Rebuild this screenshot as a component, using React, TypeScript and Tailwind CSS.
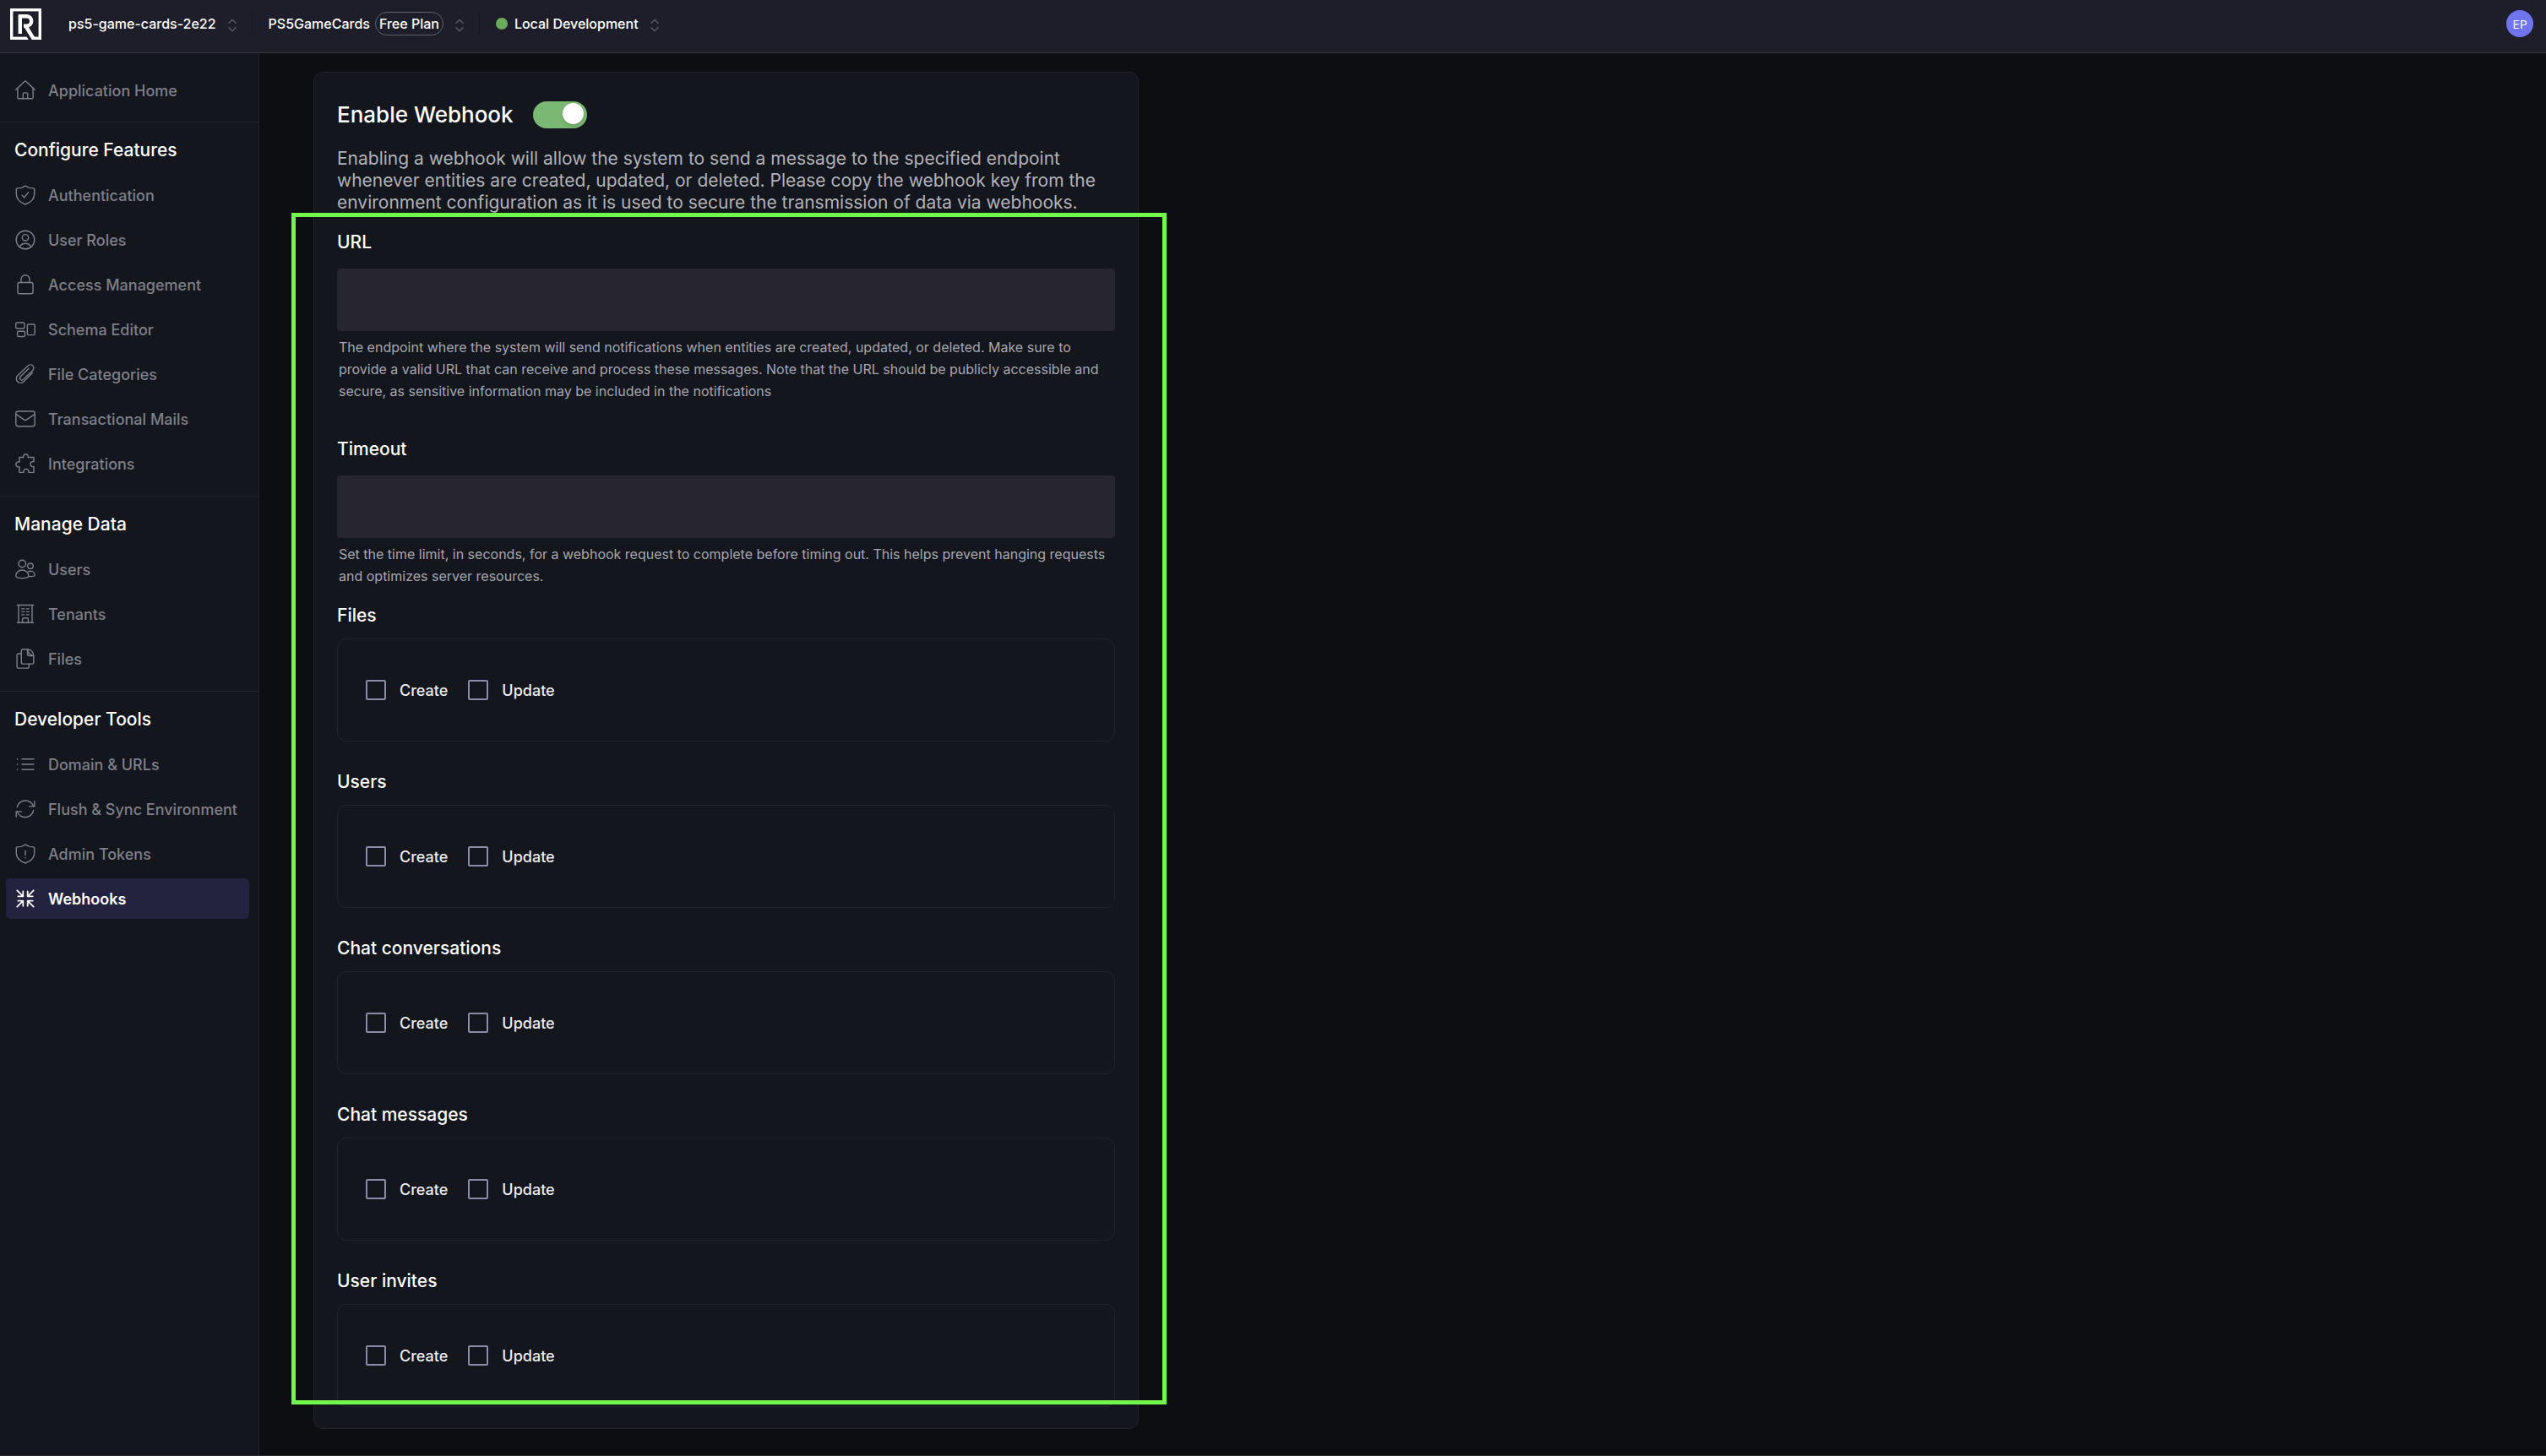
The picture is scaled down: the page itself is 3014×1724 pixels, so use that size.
import React from "react";

type IconName =
  | "home"
  | "shieldCheck"
  | "userCircle"
  | "lock"
  | "schema"
  | "clip"
  | "mail"
  | "puzzle"
  | "users"
  | "building"
  | "files"
  | "list"
  | "sync"
  | "shieldAlert"
  | "collapse";

const SHIELD =
  "M12 1c-2.6 1.9-5.6 2.9-9.4 2.9-.8 0-1.3.5-1.3 1.300v5.300c0 6 4 10.200 10.700 12.500 6.700-2.300 10.700-6.500 10.700-12.500V5.200c0-.8-.5-1.300-1.300-1.300-3.800 0-6.800-1-9.400-2.900z";

const ICONS: Record<IconName, React.ReactNode> = {
  home: (
    <>
      <path d="M.8 11.200 11 1.500c.6-.6 1.400-.6 2 0l10.200 9.700" />
      <path d="M2.900 9.300v11.400c0 .6.4 1 1 1h16.200c.6 0 1-.4 1-1V9.300" />
      <path d="M9.200 21.700v-5.200c0-.9.700-1.600 1.600-1.600h2.400c.9 0 1.600.7 1.600 1.600v5.200" />
    </>
  ),
  shieldCheck: (
    <>
      <path d={SHIELD} />
      <path d="m8.200 12.200 2.600 2.700 4.600-6.100" />
    </>
  ),
  userCircle: (
    <>
      <circle cx="12" cy="12" r="10.800" />
      <circle cx="12" cy="9.300" r="3.700" />
      <path d="M5.200 20.200c1.400-2.500 3.900-4 6.800-4s5.400 1.500 6.800 4" />
    </>
  ),
  lock: (
    <>
      <rect x="3" y="9.500" width="18" height="13.300" rx="2" />
      <path d="M6.900 9.500V5.900a5.100 5.100 0 0 1 10.200 0v3.600" />
    </>
  ),
  schema: (
    <>
      <rect x=".8" y="4" width="10.200" height="7" rx="1.600" />
      <rect x="2.600" y="14.200" width="9" height="6.300" rx="1.600" />
      <rect x="14.400" y="6" width="8.800" height="12.600" rx="1.600" />
    </>
  ),
  clip: (
    <path d="M20.500 10.200 10 20.900a5 5 0 0 1-7.200-7.100L15.200 2a3.900 3.900 0 0 1 5.600 5.500L9.600 18.300a2.400 2.400 0 0 1-3.400-3.400L16 5.300" />
  ),
  mail: (
    <>
      <rect x=".8" y="3" width="22.400" height="17.800" rx="2.500" />
      <path d="m1.200 6.600 9.600 6.500c.7.500 1.700.5 2.400 0l9.600-6.500" />
    </>
  ),
  puzzle: (
    <path d="M5 4.500h4.800c-.6-2 .8-3.700 2.700-3.700s3.300 1.700 2.700 3.700h6.800v5.200c-2-.7-4.200.7-4.200 2.900s2.200 3.500 4.200 2.800v7h-6.100c.6-2.100-.8-4.200-2.900-4.200s-3.500 2.100-2.900 4.200H5v-6.600c-2 .6-4.200-.7-4.200-2.900s2.200-3.500 4.200-2.800z" />
  ),
  users: (
    <>
      <circle cx="8.300" cy="5.500" r="4.300" />
      <circle cx="18" cy="8.200" r="3.200" />
      <path d="M8.300 13c-4.400 0-7.500 3-7.500 6.700 0 1.800 3.600 2.900 7.500 2.900s7.500-1.100 7.500-2.900c0-3.700-3.100-6.700-7.500-6.700z" />
      <path d="M15.300 15.100c.8-.5 1.700-.8 2.700-.8 3.100 0 5.200 2.100 5.200 4.600 0 1.400-3.400 2-7.400 1.600" />
    </>
  ),
  building: (
    <>
      <path d="M2.400 1.500h19.200M2.400 22.300h19.200M4 1.500v20.800M20 1.500v20.800" />
      <path d="M7.800 5.900h3M13.200 5.900h3M7.800 9.400h3M13.200 9.400h3M7.800 12.900h3M13.200 12.900h3" />
      <path d="M8.600 22.300v-4.200c0-.7.600-1.300 1.300-1.300h4.200c.7 0 1.300.6 1.300 1.300v4.200" />
    </>
  ),
  files: (
    <>
      <path d="M7.300 2.700c0-1.100.8-1.900 1.900-1.900h5.500c4 0 7.100 3.600 7.100 7.600v7.800c0 1.100-.8 1.900-1.900 1.900H9.200c-1.100 0-1.900-.8-1.900-1.900z" />
      <path d="M14.500.9v5.300c0 1.300 1 2.300 2.300 2.300h4.900M14.500.9c.6 3.800 3.200 6.700 7.200 7.600" />
      <path d="M7.300 6H4c-1.100 0-1.900.8-1.900 1.900v13.300c0 1.100.8 1.900 1.900 1.900h10.400c1.100 0 1.900-.8 1.900-1.900v-3.100" />
    </>
  ),
  list: (
    <path d="M8 5.700h14M8 12h14M8 18.300h14M2.400 5.700h.4M2.400 12h.4M2.400 18.300h.4" />
  ),
  sync: (
    <>
      <path d="M2.300 9.600C3.300 5.200 7.200 2 12 2c4.200 0 7.900 2.600 9.500 6.400" />
      <path d="M22.800 2.600v6.300h-6.300" />
      <path d="M21.700 13.500c-1 4.800-5 8.200-9.700 8.200-4.200 0-7.900-2.600-9.500-6.400" />
      <path d="M1.200 21.200v-6.300h6.300" />
    </>
  ),
  shieldAlert: (
    <>
      <path d={SHIELD} />
      <path d="M12 8.200v5.400M12 16.500v.2" />
    </>
  ),
  collapse: (
    <path
      strokeWidth="1.800"
      d="m2.300 2.300 7 7M9.300 3.300v6h-6M21.700 2.300l-7 7M14.700 3.300v6h6M2.300 21.700l7-7M9.300 20.700v-6h-6M21.700 21.700l-7-7M14.700 20.700v-6h6"
    />
  ),
};

function Icon({ name }: { name: IconName }) {
  return (
    <svg
      viewBox="0 0 24 24"
      className="size-6 shrink-0"
      fill="none"
      stroke="currentColor"
      strokeWidth="1.400"
      strokeLinecap="round"
      strokeLinejoin="round"
      aria-hidden="true"
    >
      {ICONS[name]}
    </svg>
  );
}

function UpDown() {
  return (
    <svg
      viewBox="0 0 10 16"
      className="mt-[3px] h-4 w-[10px] shrink-0 text-[#565563]"
      fill="none"
      stroke="currentColor"
      strokeWidth="1.500"
      strokeLinecap="round"
      strokeLinejoin="round"
      aria-hidden="true"
    >
      <path d="M1 5.200 5 1.200l4 4M1 10.800l4 4 4-4" />
    </svg>
  );
}

function Logo() {
  return (
    <svg viewBox="0 0 37 37" className="size-[37px]" fill="none" aria-hidden="true">
      <rect x="1.700" y="1.700" width="33.600" height="33.600" stroke="#fff" strokeWidth="3.400" />
      <path d="m16.500 24.500 8.500 14" stroke="#1e1e2a" strokeWidth="4" />
      <path
        d="M11.800 30V9.200h7.700a5.700 5.700 0 0 1 0 11.400H16"
        stroke="#fff"
        strokeWidth="4.400"
      />
      <path d="M18.200 20.500 28.400 37" stroke="#fff" strokeWidth="4.400" />
    </svg>
  );
}

type NavItem = { icon: IconName; label: string; active?: boolean };

const SECTIONS: { title: string; items: NavItem[] }[] = [
  {
    title: "Configure Features",
    items: [
      { icon: "shieldCheck", label: "Authentication" },
      { icon: "userCircle", label: "User Roles" },
      { icon: "lock", label: "Access Management" },
      { icon: "schema", label: "Schema Editor" },
      { icon: "clip", label: "File Categories" },
      { icon: "mail", label: "Transactional Mails" },
      { icon: "puzzle", label: "Integrations" },
    ],
  },
  {
    title: "Manage Data",
    items: [
      { icon: "users", label: "Users" },
      { icon: "building", label: "Tenants" },
      { icon: "files", label: "Files" },
    ],
  },
  {
    title: "Developer Tools",
    items: [
      { icon: "list", label: "Domain & URLs" },
      { icon: "sync", label: "Flush & Sync Environment" },
      { icon: "shieldAlert", label: "Admin Tokens" },
      { icon: "collapse", label: "Webhooks", active: true },
    ],
  },
];

function NavLink({ icon, label, active }: NavItem) {
  return (
    <a
      href="#"
      aria-current={active ? "page" : undefined}
      className={
        active
          ? "flex h-12 items-center gap-[15px] rounded-[5px] bg-[#24233f] px-[11px] text-[18px] font-semibold whitespace-nowrap text-white"
          : "flex h-12 items-center gap-[15px] rounded-[5px] px-[11px] text-[18px] font-medium whitespace-nowrap text-[#7e7f88]"
      }
    >
      <Icon name={icon} />
      {label}
    </a>
  );
}

function Sidebar() {
  return (
    <aside className="w-[307px] shrink-0 border-r border-[#212329] bg-[#14161e]">
      <nav>
        <div className="border-b border-[#212329] pt-5 pr-[11px] pb-[13px] pl-[7px]">
          <NavLink icon="home" label="Application Home" />
        </div>
        {SECTIONS.map((section) => (
          <section
            key={section.title}
            className="border-b border-[#212329] pt-[17px] pr-[11px] pb-[14px] pl-[7px] last:border-b-0"
          >
            <h2 className="mb-[13px] pl-[10px] text-[21px] leading-8 font-medium text-white">
              {section.title}
            </h2>
            <div className="flex flex-col gap-[5px]">
              {section.items.map((item) => (
                <NavLink key={item.label} {...item} />
              ))}
            </div>
          </section>
        ))}
      </nav>
    </aside>
  );
}

function Divider() {
  return <span className="mr-[19px] ml-[18px] h-6 w-px bg-[#181821]" />;
}

function Header() {
  return (
    <header className="flex h-[63px] shrink-0 items-center border-b border-[#35343f] bg-[#1e1e2a] pr-[15px] pb-[6px] pl-3 text-[16px] font-medium text-white">
      <a href="#" aria-label="Home" className="mr-8">
        <Logo />
      </a>
      <button type="button" className="flex items-center gap-[14px]">
        ps5-game-cards-2e22
        <UpDown />
      </button>
      <Divider />
      <button type="button" className="flex items-center gap-[14px]">
        <span className="flex items-center gap-[6px]">
          PS5GameCards
          <span className="flex h-7 items-center rounded-full border border-[#5f5f66] px-1">
            Free Plan
          </span>
        </span>
        <UpDown />
      </button>
      <Divider />
      <button type="button" className="flex items-center gap-[14px]">
        <span className="flex items-center gap-2">
          <span className="size-[14px] rounded-full bg-[#68ad5a]" />
          Local Development
        </span>
        <UpDown />
      </button>
      <button
        type="button"
        className="ml-auto flex size-8 items-center justify-center rounded-full bg-[#7174ef] font-['Open_Sans',sans-serif] text-[15px] font-normal"
      >
        EP
      </button>
    </header>
  );
}

function TextField({ id, label, hint }: { id: string; label: string; hint: string }) {
  return (
    <div>
      <label htmlFor={id} className="block text-[21px] leading-7 font-medium text-white">
        {label}
      </label>
      <input
        id={id}
        type="text"
        aria-describedby={id + "-hint"}
        className="mt-[17px] block h-[74px] w-full rounded-[4px] bg-[#262530] px-4 text-[18px] text-white outline-none"
      />
      <p id={id + "-hint"} className="mt-[6px] px-[2px] text-[16px] leading-[26px] text-[#a6a7ae]">
        {hint}
      </p>
    </div>
  );
}

function EventGroup({ title }: { title: string }) {
  return (
    <section>
      <h3 className="mb-[13px] text-[21px] leading-7 font-medium text-white">{title}</h3>
      <div className="flex h-[122px] items-center gap-6 rounded-[11px] border border-[#20232b] px-[33px]">
        {["Create", "Update"].map((action) => (
          <label
            key={action}
            className="flex items-center gap-4 text-[18px] font-medium text-[#ececf0]"
          >
            <input
              type="checkbox"
              className="size-6 appearance-none rounded-[2px] border-2 border-[#8d8ca8] checked:bg-[#8d8ca8]"
            />
            {action}
          </label>
        ))}
      </div>
    </section>
  );
}

const EVENT_GROUPS = ["Files", "Users", "Chat conversations", "Chat messages", "User invites"];

function WebhookCard() {
  return (
    <div className="relative w-full max-w-[977px] rounded-[11px] border border-[#212329] bg-[#14161e] px-[27px] pt-[34px] pb-[25px]">
      <div className="flex items-center gap-[23px]">
        <label htmlFor="enable-webhook" className="text-[26px] leading-8 font-medium text-white">
          Enable Webhook
        </label>
        <input
          id="enable-webhook"
          type="checkbox"
          role="switch"
          defaultChecked
          className="flex h-8 w-16 appearance-none items-start rounded-full bg-[#3a3a48] px-1 pt-[2px] before:size-[25px] before:rounded-full before:bg-white before:shadow-md before:content-[''] checked:justify-end checked:bg-[#7ab873]"
        />
      </div>
      <p className="mt-[23px] text-[21px] leading-[26px] text-[#b0b1b7]">
        Enabling a webhook will allow the system to send a message to the specified endpoint
        whenever entities are created, updated, or deleted. Please copy the webhook key from the
        environment configuration as it is used to secure the transmission of data via webhooks.
      </p>
      <div className="mt-5 flex flex-col gap-[42px]">
        <TextField
          id="url"
          label="URL"
          hint="The endpoint where the system will send notifications when entities are created, updated, or deleted. Make sure to provide a valid URL that can receive and process these messages. Note that the URL should be publicly accessible and secure, as sensitive information may be included in the notifications"
        />
        <TextField
          id="timeout"
          label="Timeout"
          hint="Set the time limit, in seconds, for a webhook request to complete before timing out. This helps prevent hanging requests and optimizes server resources."
        />
      </div>
      <div className="mt-5 flex flex-col gap-[34px]">
        {EVENT_GROUPS.map((title) => (
          <EventGroup key={title} title={title} />
        ))}
      </div>
      <div className="pointer-events-none absolute top-[166px] -right-[34px] bottom-7 -left-[27px] border-[5px] border-[#72f84a]" />
    </div>
  );
}

export default function App() {
  return (
    <div className="flex min-h-screen flex-col border-b border-[#2c2a2d] bg-[#0d0e12] font-[Inter,sans-serif]">
      <Header />
      <div className="flex grow">
        <Sidebar />
        <main className="min-w-0 grow px-16 pt-[22px] pb-[31px]">
          <WebhookCard />
        </main>
      </div>
    </div>
  );
}
